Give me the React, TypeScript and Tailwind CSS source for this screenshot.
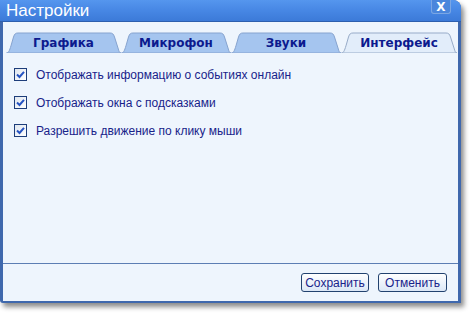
import * as React from "react";

const tabs = [
  { label: "Графика", width: "w-[115px]", w: 115 },
  { label: "Микрофон", width: "w-[110px]", w: 110 },
  { label: "Звуки", width: "w-[110px]", w: 110 },
  { label: "Интерфейс", width: "w-[116px]", w: 116 },
];

const options = [
  "Отображать информацию о событиях онлайн",
  "Отображать окна с подсказками",
  "Разрешить движение по клику мыши",
];

function tabPath(w: number) {
  return `M0.5,21 C3,21 4,17 5.5,12 L7.5,5 C8.5,2 9.5,1 12,1 H${w - 11} C${w - 8.5},1 ${w - 7.5},2 ${w - 6.5},5 L${w - 3},16 C${w - 2},19.5 ${w - 1.5},21 ${w},21 Z`;
}

function Tab({ label, width, w, active }: { label: string; width: string; w: number; active: boolean }) {
  return (
    <div className={`relative h-[21px] ${width} flex items-center justify-center`}>
      <svg className="absolute inset-0" width={w} height={21} viewBox={`0 0 ${w} 21`}>
        <path
          d={tabPath(w)}
          fill={active ? "#e2edfa" : "#a5c5ef"}
          stroke={active ? "#97abc8" : "#86a3cf"}
          strokeWidth={1}
        />
      </svg>
      <span className="relative text-[12px] font-bold text-[#0c1a8e] leading-none pt-[1px] font-['DejaVu_Sans',sans-serif]">
        {label}
      </span>
    </div>
  );
}

function Checkbox() {
  return (
    <div className="w-[13px] h-[13px] border border-[#1d3d7a] bg-gradient-to-br from-[#dfe6ef] to-white flex items-center justify-center">
      <svg width="9" height="9" viewBox="0 0 9 9">
        <path d="M1 4.5 L3.5 7 L8 1.8" fill="none" stroke="#2553c2" strokeWidth="2" />
      </svg>
    </div>
  );
}

export default function App() {
  return (
    <div className="w-[470px] h-[315px] bg-white font-['Liberation_Sans',sans-serif]">
      <div className="w-[461px] h-[303px] flex flex-col bg-[#3f68ad] rounded-tr-[8px] rounded-bl-[3px] shadow-[3px_4px_5px_rgba(0,0,0,0.45)]">
        {/* Title bar */}
        <div className="h-[22px] flex items-center justify-between pl-[6px] pr-[10px] rounded-tr-[8px] bg-gradient-to-b from-[#5596ee] via-[#4787e4] to-[#3c7ad8] border-b border-[#2d5fae]">
          <span className="text-white text-[17px] leading-none">Настройки</span>
          <div className="self-start w-[20px] h-[14px] rounded-b-[3px] border border-t-0 border-[#7aa6e4] bg-[#4a86dc] flex items-center justify-center">
            <span className="text-white text-[12px] font-bold leading-none font-['DejaVu_Sans',sans-serif]">X</span>
          </div>
        </div>

        {/* Body */}
        <div className="flex-1 mx-[3px] mb-[2px] bg-[#eef5fd] flex flex-col">
          <div className="flex pl-[3px] mt-[10px]">
            {tabs.map((t, i) => (
              <Tab key={t.label} {...t} active={i === tabs.length - 1} />
            ))}
          </div>

          <div className="flex flex-col gap-[15px] pl-[11px] pt-[15px]">
            {options.map((o) => (
              <div key={o} className="flex items-center gap-[9px] h-[13px]">
                <Checkbox />
                <span className="text-[12px] text-[#18238a] leading-none">{o}</span>
              </div>
            ))}
          </div>

          <div className="flex-1" />

          <div className="border-t border-[#5c7eb4] flex justify-end gap-[9px] pt-[9px] pb-[9px] pr-[11px]">
            <button className="w-[68px] h-[19px] rounded-[3px] border border-[#22426f] bg-gradient-to-b from-white to-[#dbe7f6] text-[12px] text-[#18238a] leading-none">
              Сохранить
            </button>
            <button className="w-[69px] h-[19px] rounded-[3px] border border-[#22426f] bg-gradient-to-b from-white to-[#dbe7f6] text-[12px] text-[#18238a] leading-none">
              Отменить
            </button>
          </div>
        </div>
      </div>
    </div>
  );
}
